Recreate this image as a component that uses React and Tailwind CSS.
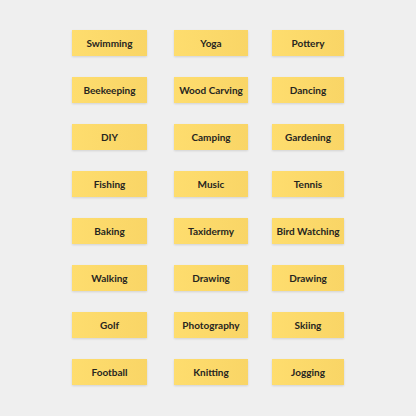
const columns = [
  {
    width: "w-[75px]",
    items: ["Swimming", "Beekeeping", "DIY", "Fishing", "Baking", "Walking", "Golf", "Football"],
  },
  {
    width: "w-[74px]",
    items: ["Yoga", "Wood Carving", "Camping", "Music", "Taxidermy", "Drawing", "Photography", "Knitting"],
  },
  {
    width: "w-[72px]",
    items: ["Pottery", "Dancing", "Gardening", "Tennis", "Bird Watching", "Drawing", "Skiing", "Jogging"],
  },
];

function Tag({ label, width }) {
  return (
    <div
      className={`${width} flex h-[26px] items-center justify-center whitespace-nowrap bg-gradient-to-r from-[#fedd6e] to-[#f9d566] text-[10px] font-bold text-[#26251f] shadow-[0_1px_2px_rgba(0,0,0,0.12)]`}
    >
      {label}
    </div>
  );
}

export default function App() {
  return (
    <div
      className="h-[416px] w-[416px] bg-[#efefef] pl-[72px] pt-[30px]"
      style={{ fontFamily: "Lato, 'Noto Sans', sans-serif" }}
    >
      <div className="flex">
        {columns.map((col, i) => (
          <div
            key={i}
            className={`flex flex-col gap-[21px] ${i === 1 ? "ml-[27px]" : ""} ${i === 2 ? "ml-[24px]" : ""}`}
          >
            {col.items.map((label, j) => (
              <Tag key={j} label={label} width={col.width} />
            ))}
          </div>
        ))}
      </div>
    </div>
  );
}
